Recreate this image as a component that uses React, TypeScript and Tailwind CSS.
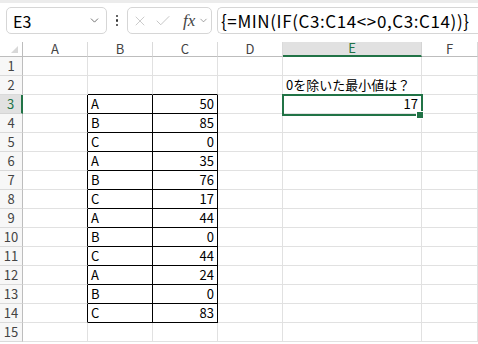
import { X, Check, ChevronDown } from 'lucide-react'

const FONT = "font-['Noto_Sans_CJK_JP','Noto_Sans',sans-serif]"

const data: [string, number][] = [
  ['A', 50], ['B', 85], ['C', 0], ['A', 35], ['B', 76], ['C', 17],
  ['A', 44], ['B', 0], ['C', 44], ['A', 24], ['B', 0], ['C', 83],
]

const cols = ['A', 'B', 'C', 'D', 'E', 'F']
const widths = ['w-[65px]', 'w-[65px]', 'w-[65px]', 'w-[65px]', 'w-[139px]', 'flex-1']

function cn(...xs: (string | false | undefined | null)[]) {
  return xs.filter(Boolean).join(' ')
}

function Cell({ w, className = '', children }: { w: string; className?: string; children?: React.ReactNode }) {
  return (
    <div className={`${w} shrink-0 h-full flex items-end border-r border-b px-[3px] pb-[1px] text-[13px] leading-[16px] text-black ${className}`}>
      {children}
    </div>
  )
}

function Row({ n }: { n: number }) {
  const item = n >= 3 && n <= 14 ? data[n - 3] : null
  const selected = n === 3
  return (
    <div className="flex h-[19px]">
      <div className={cn('w-[23px] shrink-0 flex items-end justify-center border-b pb-[1px] text-[13px] leading-[16px]',
        selected ? 'bg-[#e1e1e1] border-r-2 border-r-[#217346] border-b-[#d4d4d4] text-[#217346]' : 'bg-[#f7f7f7] border-r border-r-[#bdbdbd] border-b-[#dadada] text-[#444]')}>
        {n}
      </div>
      <Cell w="w-[65px]" className={item ? 'border-r-black border-b-[#e1e1e1]' : 'border-[#e1e1e1]'} />
      <Cell w="w-[65px]" className={item ? 'border-black' : n === 2 ? 'border-r-[#e1e1e1] border-b-black' : 'border-[#e1e1e1]'}>
        {item?.[0]}
      </Cell>
      <Cell w="w-[65px]" className={cn('justify-end', item ? 'border-black' : n === 2 ? 'border-r-[#e1e1e1] border-b-black' : 'border-[#e1e1e1]')}>
        {item?.[1]}
      </Cell>
      <Cell w="w-[65px]" className="border-[#e1e1e1]" />
      <Cell w="w-[139px]" className={cn('border-[#e1e1e1] relative', selected && 'justify-end')}>
        {n === 2 && <span className="whitespace-nowrap">0を除いた最小値は？</span>}
        {selected && (
          <>
            <span>17</span>
            <div className="absolute -left-[1px] -top-[1px] w-[141px] h-[22px] border-2 border-[#217346] z-10 pointer-events-none" />
            <div className="absolute left-[133px] top-[16px] w-[8px] h-[8px] bg-[#217346] border border-white z-20" />
          </>
        )}
      </Cell>
      <Cell w="flex-1" className="border-[#e1e1e1]" />
    </div>
  )
}

export default function App() {
  return (
    <div className={`w-[478px] h-[344px] overflow-hidden bg-white ${FONT}`}>
      <div className="h-[3px] bg-[#ececec]" />
      {/* formula bar */}
      <div className="flex items-center h-[27px] mt-[4px]">
        <div className="ml-[6px] w-[101px] h-full shrink-0 rounded-[5px] border border-[#d6d6d6] flex items-center justify-between pl-[6px] pr-[5px]">
          <span className="text-[16px] text-black">E3</span>
          <ChevronDown className="w-[13px] h-[13px] text-[#555]" strokeWidth={1.5} />
        </div>
        <div className="w-[20px] h-full shrink-0 flex flex-col items-center justify-center gap-[2px]">
          <span className="w-[2.5px] h-[2.5px] rounded-full bg-[#333]" />
          <span className="w-[2.5px] h-[2.5px] rounded-full bg-[#333]" />
          <span className="w-[2.5px] h-[2.5px] rounded-full bg-[#333]" />
        </div>
        <div className="w-[85px] h-full shrink-0 rounded-[5px] border border-[#d6d6d6] flex items-center pl-[4px]">
          <X className="w-[16px] h-[16px] text-[#c4c4c4]" strokeWidth={1.3} />
          <Check className="w-[18px] h-[18px] text-[#c4c4c4] ml-[6px]" strokeWidth={1.3} />
          <span className="ml-[11px] font-['Liberation_Serif',serif] italic text-[17px] text-[#444] leading-none">fx</span>
          <ChevronDown className="w-[11px] h-[11px] text-[#777] ml-[3px]" strokeWidth={1.5} />
        </div>
        <div className="ml-[5px] flex-1 h-full rounded-l-[5px] border border-r-0 border-[#d6d6d6] flex items-center pl-[3px] text-[17px] tracking-[0.6px] text-black whitespace-nowrap overflow-hidden">
          {'{=MIN(IF(C3:C14<>0,C3:C14))}'}
        </div>
      </div>
      {/* column headers */}
      <div className="flex h-[15px] mt-[8px]">
        <div className="w-[23px] shrink-0 border-r border-b border-[#bdbdbd] relative">
          <div className="absolute right-[4px] bottom-[3px] w-0 h-0 border-l-[7px] border-l-transparent border-b-[7px] border-b-[#d8d8d8]" />
        </div>
        {cols.map((c, i) => (
          <div key={c} className={cn(widths[i], 'shrink-0 flex items-end justify-center border-r text-[13px] leading-[14px]',
            c === 'E' ? 'bg-[#e1e1e1] border-b-2 border-b-[#217346] border-r-[#d4d4d4] text-[#217346]' : 'border-b border-b-[#bdbdbd] border-r-[#dadada] text-[#444]')}>
            {c}
          </div>
        ))}
      </div>
      {Array.from({ length: 15 }, (_, i) => <Row key={i} n={i + 1} />)}
    </div>
  )
}
